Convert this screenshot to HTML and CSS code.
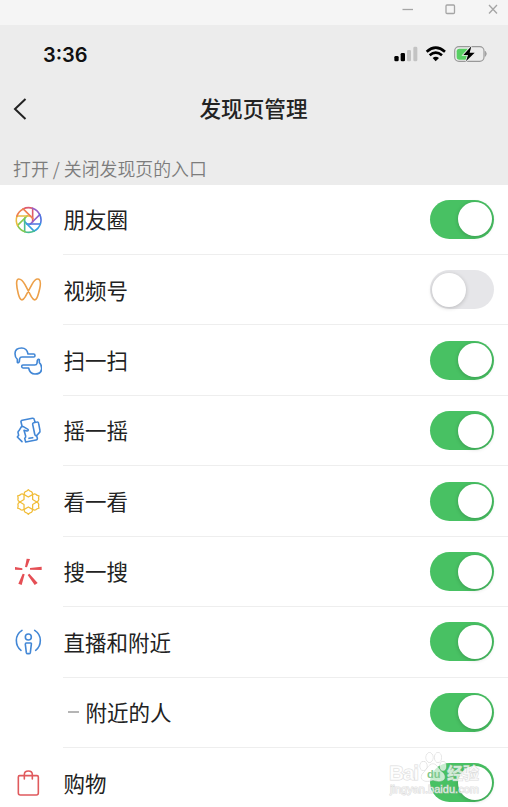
FILE: index.html
```html
<!DOCTYPE html>
<html lang="zh-CN">
<head>
<meta charset="utf-8">
<title>发现页管理</title>
<link rel="stylesheet" href="styles.css">
</head>
<body>
<div class="window">
  <div class="titlebar">
    <svg width="128" height="25" viewBox="0 0 128 25" fill="none" stroke="#a5a5a5" stroke-width="1.3"><path d="M22.5 9.5h10.5"/><rect x="66" y="5" width="8.5" height="8.5" rx="1"/><path d="M109 5l8 8.5M117 5l-8 8.5"/></svg>
  </div>
  <header class="header">
    <div class="status">
      <span class="time">3:36</span>
      <svg width="128" height="55" viewBox="0 0 384 165">
        <g transform="translate(0 -75)">
          <rect x="43" y="168" width="13" height="16" rx="4"/><rect x="62" y="159" width="13" height="25" rx="4"/>
          <g fill="#c3c3c3"><rect x="81" y="150" width="12" height="34" rx="4"/><rect x="100" y="140" width="12" height="44" rx="4"/></g>
          <g fill="none" stroke="#000" stroke-width="8"><path d="M140 155Q167 131 195 155"/><path d="M149 166Q167 150 186 166"/></g>
          <path d="M158 174Q167 167 177 174L167 184Z"/>
          <rect x="224" y="140" width="88" height="44" rx="13" fill="none" stroke="#999" stroke-width="3.5"/>
          <path d="M316 154q6 7 0 15z" fill="#999" stroke="#999" stroke-width="2"/>
          <path d="M238 146h25v33h-25q-8 0-8-8v-17q0-8 8-8z" fill="#58cf63"/>
          <path d="M274 139L250 165H264L258 184L284 158H269Z" stroke="#ececec" stroke-width="5" paint-order="stroke"/>
        </g>
      </svg>
    </div>
    <div class="nav">
      <svg class="back" width="14" height="24" viewBox="0 0 14 24" fill="none" stroke="#222" stroke-width="2"><path d="M12.5 2L2 12l10.500 10"/></svg>
      <h1>发现页管理</h1>
    </div>
    <p class="caption">打开 / 关闭发现页的入口</p>
  </header>
  <main class="list">
    <div class="row"><svg class="icon" viewBox="42 46 84 84">
      <g transform="translate(86 88)">
        <g stroke="#dc5a70"><path d="M12-35V6M12-35A37 37 0 0 0-17-33"/></g>
        <g transform="rotate(45)" stroke="#9560c8"><path d="M12-35V6M12-35A37 37 0 0 0-17-33"/></g>
        <g transform="rotate(90)" stroke="#4e72df"><path d="M12-35V6M12-35A37 37 0 0 0-17-33"/></g>
        <g transform="rotate(135)" stroke="#35a0df"><path d="M12-35V6M12-35A37 37 0 0 0-17-33"/></g>
        <g transform="rotate(180)" stroke="#48bd91"><path d="M12-35V6M12-35A37 37 0 0 0-17-33"/></g>
        <g transform="rotate(225)" stroke="#83c94e"><path d="M12-35V6M12-35A37 37 0 0 0-17-33"/></g>
        <g transform="rotate(270)" stroke="#e8bc3f"><path d="M12-35V6M12-35A37 37 0 0 0-17-33"/></g>
        <g transform="rotate(315)" stroke="#ef8050"><path d="M12-35V6M12-35A37 37 0 0 0-17-33"/></g>
      </g></svg><div class="cell"><span>朋友圈</span><i class="switch on"></i></div></div>
    <div class="row"><svg class="icon" viewBox="42 258 84 84" stroke="#eda049"><path d="M56 267C47 267 49 289 55 312C61 334 68 334 76 320L96 283C104 268 111 265 117 268C124 273 121 292 115 312C109 334 102 334 94 320L75 284C68 271 62 267 56 267Z"/></svg><div class="cell"><span>视频号</span><i class="switch"></i></div></div>
    <div class="row"><svg class="icon" viewBox="42 49 84 84" stroke="#4287d6">
      <path id="hand" d="M52 95V86Q45 80 45 69C45 56 53 52 65 52C76 52 82 59 84 70H101Q105 70 105 75Q105 79 101 79H66Q60 79 59 84L58 93Q55 98 52 95Z"/><use href="#hand" transform="rotate(180 85 91)"/></svg><div class="cell"><span>扫一扫</span><i class="switch on"></i></div></div>
    <div class="row"><svg class="icon" viewBox="42 260 84 84" stroke="#4287d6">
      <path d="M66 287L63 275Q62 271 67 270L97 264Q102 263 103 268L105 276M77 335L108 329Q113 328 112 323L110 317M98 282Q97 278 101 277L111 275Q115 274 116 280L120 301Q121 305 117 308L111 315Q105 318 104 311ZL104 311M66 334L52 320L56 315L54 306Q54 303 57 301L63 291Q66 287 70 289L84 297Q86 302 81 302L72 300L77 317Q78 321 74 324L77 335M87 324L98 322"/></svg><div class="cell"><span>摇一摇</span><i class="switch on"></i></div></div>
    <div class="row"><svg class="icon" viewBox="42 51 84 84" stroke="#f1bd39">
      <g class="flower" transform="translate(85 93)"><path id="petal" d="M0-37Q4-32 9-31Q13-29 12.500-22L0-15L-12.500-22Q-13-29-9-31Q-4-32 0-37Z"/><use href="#petal" transform="rotate(60)"/><use href="#petal" transform="rotate(120)"/><use href="#petal" transform="rotate(180)"/><use href="#petal" transform="rotate(240)"/><use href="#petal" transform="rotate(300)"/></g></svg><div class="cell"><span>看一看</span><i class="switch on"></i></div></div>
    <div class="row"><svg class="icon" viewBox="42 264 84 84" stroke="none"><path fill="#e54f55" d="M80 266L90 267L81 292L75 291ZM125 290V300L90 299V294ZM45 291L67 295V300L45 299ZM55 341L68 311L74 313L65 345ZM104 345L83 315L88 311L113 339Z"/></svg><div class="cell"><span>搜一搜</span><i class="switch on"></i></div></div>
    <div class="row"><svg class="icon" viewBox="42 55 84 84" stroke="#4287d6">
      <circle cx="85" cy="82" r="9"/><path d="M79 100H92Q95 100 94 104L91 129Q90 132 87 132H83Q80 132 79 129L76 104Q76 100 79 100ZM66 62Q49 73 49 92Q49 112 63 122M104 62Q121 73 121 92Q121 112 107 122"/></svg><div class="cell"><span>直播和附近</span><i class="switch on"></i></div></div>
    <div class="row"><span class="icon"></span><div class="cell"><span class="sub"><b class="dash"></b>附近的人</span><i class="switch on"></i></div></div>
    <div class="row"><svg class="icon" viewBox="42 477 84 84" stroke="#e05a5d"><path d="M59 497H111Q115 497 115 501V549Q115 555 109 555H61Q55 555 55 549V501Q55 497 59 497ZM73 507V494Q73 483 85 483Q97 483 97 494V507"/></svg><div class="cell"><span>购物</span><i class="switch on"></i></div></div>
  </main>
  <svg class="watermark" width="118" height="60" viewBox="370 740 118 60">
    <g class="mark"><text x="389" y="780" font-size="21" textLength="30">Bai</text><text x="447" y="779" font-size="16" textLength="32">经验</text><text class="url" x="390" y="793" font-size="11" textLength="89">jingyan.baidu.com</text>
    <ellipse cx="423.500" cy="766" rx="3.500" ry="4.500"/><ellipse cx="429.500" cy="757.500" rx="3.500" ry="5"/><ellipse cx="438" cy="757.500" rx="3.500" ry="5"/><ellipse cx="443" cy="766" rx="3" ry="4.500"/><path d="M433 764C428 764 427 770 423 773C418 780 425 783 433 780C441 783 448 780 443 773C438 770 438 764 433 764Z"/></g>
    <text class="du" x="427" y="778" font-size="11">du</text>
  </svg>
</div>
</body>
</html>
```
FILE: styles.css
```css
* { box-sizing: border-box; }
body {
  margin: 0;
  background: #fff;
  color: #222;
  font-family: "Noto Sans CJK SC", sans-serif;
}
.window {
  position: relative;
  height: 807px;
  overflow: hidden;
}
.titlebar {
  display: flex;
  justify-content: flex-end;
  height: 25px;
  background: #f5f5f5;
}
.header {
  height: 159.6px;
  background: #ececec;
}
.status {
  display: flex;
  justify-content: space-between;
  height: 55px;
  padding-left: 43px;
}
.time {
  font: 600 20px/60px Inter, sans-serif;
  color: #111;
}
.nav {
  display: grid;
  grid-template-columns: 60px 1fr 60px;
  align-items: center;
  height: 57px;
}
.back { margin-left: 13px; }
h1 {
  margin: -1px 1px 0 0;
  font-size: 21.6px;
  font-weight: 500;
  line-height: 30px;
  text-align: center;
}
.caption {
  margin: 0;
  padding: 17px 0 0 13px;
  color: #7c7c7c;
  font-size: 17.9px;
  font-weight: 350;
  line-height: 28px;
}
.row {
  display: flex;
  align-items: center;
  height: 70.45px;
  padding-left: 14px;
}
.icon {
  flex: none;
  width: 28px;
  height: 28px;
  fill: none;
  stroke-width: 4.8;
  stroke-linecap: round;
  stroke-linejoin: round;
}
.flower { stroke-width: 3.8; }
.cell {
  display: flex;
  flex: 1;
  align-items: center;
  justify-content: space-between;
  height: 100%;
  margin-left: 21px;
  padding: 0 14px 0 0.5px;
  border-bottom: 1px solid #eee;
  font-size: 21.5px;
}
.cell > span { padding-bottom: 1.5px; }
.cell > .sub {
  display: flex;
  align-items: center;
  gap: 7px;
  padding-left: 4px;
}
.dash {
  width: 11px;
  height: 2px;
  background: #b5b5b5;
}
.switch {
  display: flex;
  width: 64.5px;
  height: 39px;
  padding: 2.5px;
  border-radius: 20px;
  background: #e6e6e9;
}
.switch::before {
  content: "";
  width: 34px;
  height: 34px;
  border-radius: 50%;
  background: #fff;
  box-shadow: 0 1px 4px rgba(0, 0, 0, .2);
}
.on {
  justify-content: flex-end;
  background: #48c163;
}
.watermark {
  position: absolute;
  left: 370px;
  top: 740px;
}
.mark {
  fill: rgba(255, 255, 255, .7);
  stroke: rgba(200, 200, 200, .65);
  stroke-width: 1;
  paint-order: stroke;
  font-family: "Liberation Sans", "Noto Sans CJK SC", sans-serif;
  font-weight: bold;
}
.url { font-weight: normal; }
.du {
  fill: #7fc98d;
  font-family: "Liberation Sans", sans-serif;
  font-weight: bold;
}
```
